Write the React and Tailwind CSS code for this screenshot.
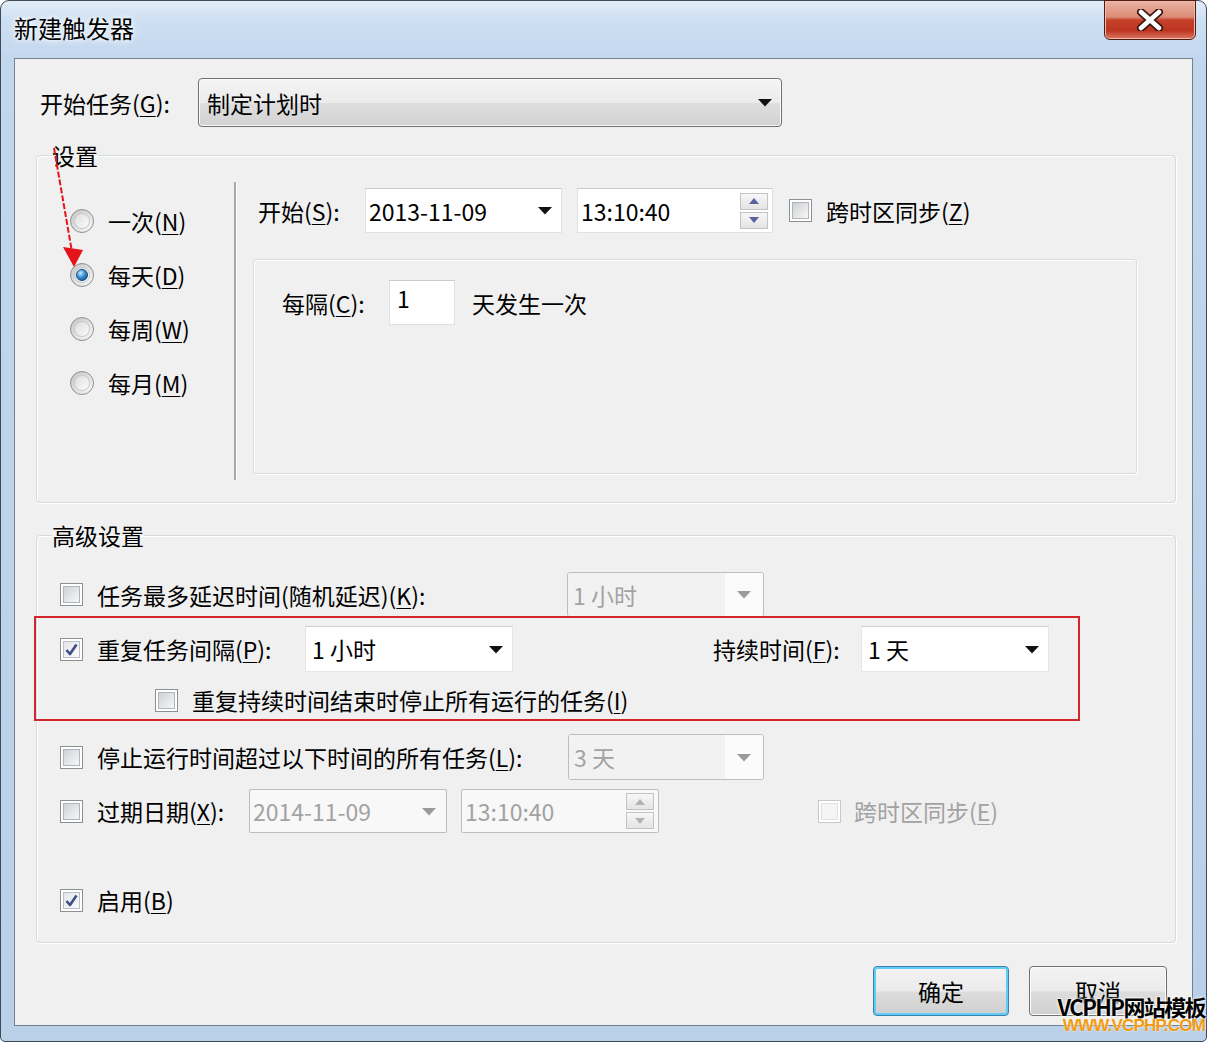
import clsx from "clsx";

const U = ({ children }) => (
  <span className="underline decoration-1 underline-offset-[3px]">{children}</span>
);

const Arrow = ({ gray }) => (
  <svg width="16" height="9" viewBox="0 0 16 9" className="shrink-0">
    <path d="M1 1 L15 1 L8 8.5 Z" fill={gray ? "#9a9a9a" : "#111"} />
  </svg>
);

const Check = ({ checked, disabled }) => (
  <span
    className={clsx(
      "flex h-[23px] w-[23px] shrink-0 items-center justify-center border bg-white p-[2px]",
      disabled ? "border-[#c9c9c9]" : "border-[#8e8f8f]"
    )}
  >
    <span
      className={clsx(
        "flex h-full w-full items-center justify-center border",
        disabled
          ? "border-[#e0e0e0] bg-[#f5f5f5]"
          : checked
          ? "border-[#b9bfc6] bg-linear-to-br from-[#e3e5e8] to-[#fbfbfb]"
          : "border-[#aeb4bb] bg-linear-to-br from-[#cfd2d5] to-[#f7f7f7]"
      )}
    >
      {checked && (
        <svg width="15" height="15" viewBox="0 0 15 15">
          <path
            d="M2.5 8 L6 12 L12.5 2.5"
            fill="none"
            stroke="#3d4d8a"
            strokeWidth="2.6"
            strokeLinejoin="round"
          />
        </svg>
      )}
    </span>
  </span>
);

const Radio = ({ selected }) => (
  <span className="flex h-[24px] w-[24px] shrink-0 items-center justify-center rounded-full border border-[#8e8f8f] bg-linear-to-br from-[#c4c4c4] to-[#fafafa] p-[3px]">
    <span className="flex h-full w-full items-center justify-center rounded-full border border-[#cacaca] bg-linear-to-br from-[#dedede] to-[#fbfbfb]">
      {selected && (
        <span className="h-[12px] w-[12px] rounded-full border border-[#174a7c] bg-[radial-gradient(circle_at_35%_30%,#c6ecff_0%,#3a93d2_45%,#0d3f72_100%)]" />
      )}
    </span>
  </span>
);

const Spin = ({ gray }) => (
  <span className="flex flex-col gap-[2px]">
    {[0, 1].map((i) => (
      <span
        key={i}
        className="flex h-[17px] w-[28px] items-center justify-center border border-[#c3c3c3] bg-linear-to-b from-[#f7f7f7] to-[#e4e4e4]"
      >
        <svg width="10" height="6" viewBox="0 0 10 6">
          <path
            d={i === 0 ? "M0 6 L10 6 L5 0 Z" : "M0 0 L10 0 L5 6 Z"}
            fill={gray ? "#b4b4b4" : "#5764a0"}
          />
        </svg>
      </span>
    ))}
  </span>
);

const Label = ({ children, className, gray }) => (
  <span
    className={clsx(
      "shrink-0 whitespace-nowrap text-[23px] leading-[30px]",
      gray ? "text-[#a2a2a2]" : "text-black",
      className
    )}
  >
    {children}
  </span>
);

const Legend = ({ children }) => (
  <legend className="ml-[15px] p-0 text-[23px] leading-[26px] text-black">{children}</legend>
);

const groupCls =
  "ml-[21px] w-[1140px] rounded-[4px] border border-[#d3dbe1] shadow-[inset_1px_1px_0_#ffffff,1px_1px_0_#ffffff]";

export default function App() {
  return (
    <div className="relative h-[1044px] w-[1210px] overflow-hidden bg-white font-['Noto_Sans_CJK_SC','Noto_Sans',sans-serif]">
      <div className="flex h-[1042px] w-[1207px] flex-col rounded-t-[9px] rounded-b-[5px] border border-[#3f4a58] bg-[linear-gradient(to_bottom,#e2ecf7_0px,#cddff2_20px,#c2d7ee_60px,#b9d0e8_100%)]">
        {/* title bar */}
        <div className="flex h-[57px] shrink-0 items-start">
          <span className="ml-[13px] mt-[12px] text-[24px] leading-[30px] text-black [text-shadow:0_0_8px_#ffffff,0_0_4px_#ffffff]">
            新建触发器
          </span>
          <div className="flex-1" />
          <div className="mr-[10px] mt-[-1px] flex h-[40px] w-[92px] items-center justify-center rounded-b-[6px] border border-[#4f1d14] bg-[linear-gradient(to_bottom,#eab3a4_0%,#dc8b76_42%,#c5412b_50%,#bd3520_78%,#da7863_100%)] shadow-[inset_0_0_0_1px_#f1b9aa]">
            <svg width="30" height="22" viewBox="0 0 30 22">
              <path d="M6 3 L24 19 M24 3 L6 19" stroke="#3a1710" strokeWidth="8" strokeLinecap="round" />
              <path d="M6 3 L24 19 M24 3 L6 19" stroke="#ffffff" strokeWidth="4.6" strokeLinecap="round" />
            </svg>
          </div>
        </div>

        {/* client */}
        <div className="mx-[13px] mb-[15px] flex flex-1 flex-col border border-[#76818e] bg-[#f0f0f0]">
          {/* start task */}
          <div className="ml-[25px] mt-[19px] flex h-[49px] items-center">
            <Label className="w-[158px]">
              开始任务(<U>G</U>):
            </Label>
            <div className="flex h-[49px] w-[584px] items-center justify-between rounded-[4px] border border-[#707070] bg-[linear-gradient(to_bottom,#f4f4f4_0%,#ececec_50%,#dedede_52%,#d2d2d2_100%)] pl-[8px] pr-[8px] shadow-[inset_0_0_0_1px_#fafafa]">
              <Label>制定计划时</Label>
              <Arrow />
            </div>
          </div>

          {/* settings group */}
          <fieldset className={clsx(groupCls, "mt-[15px]")}>
            <Legend>设置</Legend>
            <div className="flex">
              <div className="flex w-[197px] shrink-0 flex-col pl-[33px] pt-[26px]">
                {[
                  ["一次", "N", false],
                  ["每天", "D", true],
                  ["每周", "W", false],
                  ["每月", "M", false],
                ].map(([t, k, s]) => (
                  <div key={k} className="flex h-[54px] items-center gap-[14px]">
                    <Radio selected={s} />
                    <Label>
                      {t}(<U>{k}</U>)
                    </Label>
                  </div>
                ))}
              </div>
              <div className="mt-[14px] flex h-[298px] shrink-0">
                <div className="w-[2px] bg-[#a9a9a9]" />
                <div className="w-[1px] bg-white" />
              </div>
              <div className="ml-[16px] flex flex-col pb-[28px] pt-[20px]">
                <div className="flex h-[45px] items-center pl-[5px]">
                  <Label className="w-[107px]">
                    开始(<U>S</U>):
                  </Label>
                  <div className="flex h-[45px] w-[197px] items-center justify-between border border-[#e1e1e1] border-t-[#c9c9c9] bg-white pl-[3px] pr-[8px]">
                    <Label>2013-11-09</Label>
                    <Arrow />
                  </div>
                  <div className="ml-[15px] flex h-[45px] w-[196px] items-center justify-between border border-[#e1e1e1] border-t-[#c9c9c9] bg-white pl-[3px] pr-[4px]">
                    <Label>13:10:40</Label>
                    <Spin />
                  </div>
                  <span className="ml-[16px]">
                    <Check />
                  </span>
                  <Label className="ml-[14px]">
                    跨时区同步(<U>Z</U>)
                  </Label>
                </div>
                <div className="mt-[26px] h-[215px] w-[884px] rounded-[3px] border border-[#d8dcdf] shadow-[inset_1px_1px_0_#ffffff,1px_1px_0_#ffffff]">
                  <div className="flex h-[45px] items-center pl-[28px] mt-[20px]">
                    <Label className="w-[107px]">
                      每隔(<U>C</U>):
                    </Label>
                    <div className="flex h-[45px] w-[66px] items-start border border-[#e1e1e1] border-t-[#c9c9c9] bg-white pl-[7px] pt-[2px]">
                      <Label>1</Label>
                    </div>
                    <Label className="ml-[17px]">天发生一次</Label>
                  </div>
                </div>
              </div>
            </div>
          </fieldset>

          {/* advanced group */}
          <fieldset className={clsx(groupCls, "mt-[19px]")}>
            <Legend>高级设置</Legend>
            <div className="flex flex-col pb-[27px]">
              <div className="mt-[24px] flex h-[45px] items-center pl-[23px]">
                <Check />
                <Label className="ml-[14px] w-[470px]">
                  任务最多延迟时间(随机延迟)(<U>K</U>):
                </Label>
                <div className="flex h-[45px] w-[197px] items-stretch overflow-hidden rounded-[3px] border border-[#bdbdbd]">
                  <div className="flex flex-1 items-center bg-[#f2f2f2] pl-[5px]">
                    <Label gray>1 小时</Label>
                  </div>
                  <div className="flex w-[38px] items-center justify-center bg-[#fbfbfb]">
                    <Arrow gray />
                  </div>
                </div>
              </div>

              <div className="-ml-[3px] -mt-[1px] flex w-[1046px] flex-col border-2 border-[#d3262c] pb-[4px]">
                <div className="mt-[8px] flex h-[46px] items-center pl-[24px]">
                  <Check checked />
                  <Label className="ml-[14px] w-[208px]">
                    重复任务间隔(<U>P</U>):
                  </Label>
                  <div className="flex h-[46px] w-[208px] items-center justify-between border border-[#e6e6e6] border-t-[#cfcfcf] bg-white pl-[6px] pr-[8px]">
                    <Label>1 小时</Label>
                    <Arrow />
                  </div>
                  <Label className="ml-[200px] w-[148px]">
                    持续时间(<U>F</U>):
                  </Label>
                  <div className="flex h-[46px] w-[188px] items-center justify-between border border-[#e6e6e6] border-t-[#cfcfcf] bg-white pl-[6px] pr-[8px]">
                    <Label>1 天</Label>
                    <Arrow />
                  </div>
                </div>
                <div className="mt-[13px] flex h-[30px] items-center pl-[119px]">
                  <Check />
                  <Label className="ml-[14px]">
                    重复持续时间结束时停止所有运行的任务(<U>I</U>)
                  </Label>
                </div>
              </div>

              <div className="mt-[13px] flex h-[46px] items-center pl-[23px]">
                <Check />
                <Label className="ml-[14px] w-[471px]">
                  停止运行时间超过以下时间的所有任务(<U>L</U>):
                </Label>
                <div className="flex h-[46px] w-[196px] items-stretch overflow-hidden rounded-[3px] border border-[#bdbdbd]">
                  <div className="flex flex-1 items-center bg-[#f2f2f2] pl-[5px]">
                    <Label gray>3 天</Label>
                  </div>
                  <div className="flex w-[38px] items-center justify-center bg-[#fbfbfb]">
                    <Arrow gray />
                  </div>
                </div>
              </div>

              <div className="mt-[9px] flex h-[44px] items-center pl-[23px]">
                <Check />
                <Label className="ml-[14px] w-[152px]">
                  过期日期(<U>X</U>):
                </Label>
                <div className="flex h-[44px] w-[198px] items-center justify-between rounded-[2px] border border-[#bdbdbd] bg-[#f8f8f8] pl-[3px] pr-[9px]">
                  <Label gray>2014-11-09</Label>
                  <Arrow gray />
                </div>
                <div className="ml-[14px] flex h-[44px] w-[198px] items-center justify-between rounded-[2px] border border-[#bdbdbd] bg-[#f8f8f8] pl-[3px] pr-[4px]">
                  <Label gray>13:10:40</Label>
                  <Spin gray />
                </div>
                <span className="ml-[159px]">
                  <Check disabled />
                </span>
                <Label gray className="ml-[13px]">
                  跨时区同步(<U>E</U>)
                </Label>
              </div>

              <div className="mt-[52px] flex h-[30px] items-center pl-[23px]">
                <Check checked />
                <Label className="ml-[14px]">
                  启用(<U>B</U>)
                </Label>
              </div>
            </div>
          </fieldset>

          {/* buttons */}
          <div className="mt-[23px] flex justify-end gap-[20px] pr-[25px]">
            <button className="flex h-[50px] w-[136px] items-center justify-center rounded-[4px] border border-[#3c7fb1] bg-[linear-gradient(to_bottom,#f3f3f3_0%,#ebebeb_50%,#dddddd_52%,#cfcfcf_100%)] shadow-[inset_0_0_0_2px_#62cdf4]">
              <Label>确定</Label>
            </button>
            <button className="flex h-[50px] w-[138px] items-center justify-center rounded-[4px] border border-[#707070] bg-[linear-gradient(to_bottom,#f3f3f3_0%,#ebebeb_50%,#dddddd_52%,#cfcfcf_100%)] shadow-[inset_0_0_0_1px_#fcfcfc]">
              <Label>取消</Label>
            </button>
          </div>
        </div>
      </div>

      {/* annotation arrow */}
      <svg className="pointer-events-none absolute left-0 top-0" width="120" height="300">
        <line x1="54" y1="148" x2="72" y2="252" stroke="#e3151b" strokeWidth="2" strokeDasharray="6 2" />
        <polygon points="63,247 83,250 74,267" fill="#e3151b" />
      </svg>

      {/* watermark */}
      <div className="pointer-events-none absolute bottom-[11px] right-[5px] flex flex-col items-end">
        <span className="text-[22px] font-bold leading-[26px] tracking-[-1.6px] text-black [text-shadow:0_0_2px_#ffffff,0_0_2px_#ffffff,0_0_3px_#ffffff]">
          VCPHP网站模板
        </span>
        <span className="font-['Liberation_Sans',sans-serif] text-[17px] font-bold leading-[14px] tracking-[-0.8px] text-[#f39c12] [text-shadow:0_0_2px_#ffffff]">
          WWW.VCPHP.COM
        </span>
      </div>
    </div>
  );
}
